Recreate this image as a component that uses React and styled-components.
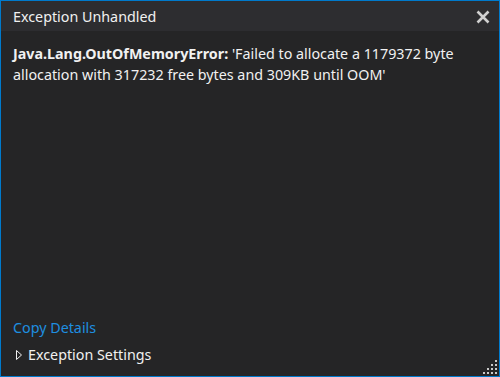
import React from "react";
import styled, { createGlobalStyle } from "styled-components";

const GlobalStyle = createGlobalStyle`
  html, body {
    margin: 0;
    padding: 0;
    background: #252526;
  }
  body {
    font-family: "Segoe UI", "Noto Sans", "Open Sans", sans-serif;
  }
`;

const Window = styled.div`
  box-sizing: border-box;
  width: 500px;
  height: 377px;
  border: 1px solid #007acc;
  background: #252526;
  display: flex;
  flex-direction: column;
  color: #f1f1f1;
`;

const TitleBar = styled.div`
  height: 29px;
  background: #2d2d30;
  display: flex;
  align-items: center;
  justify-content: space-between;
  padding: 1px 8px 0 12px;
`;

const Title = styled.span`
  font-size: 14.3px;
  color: #f1f1f1;
`;

const CloseButton = styled.button`
  border: none;
  background: none;
  padding: 0;
  width: 16px;
  height: 16px;
  display: flex;
  align-items: center;
  justify-content: center;
  cursor: pointer;
`;

const Body = styled.div`
  flex: 1;
  display: flex;
  flex-direction: column;
  padding: 12px 12px 12px 12px;
`;

const Message = styled.div`
  font-size: 14.3px;
  line-height: 21px;
  color: #f1f1f1;
`;

const ErrorName = styled.span`
  font-weight: 700;
`;

const Footer = styled.div`
  margin-top: auto;
  display: flex;
  flex-direction: column;
  gap: 8px;
`;

const Link = styled.a`
  font-size: 14.3px;
  color: #1e8fe0;
  text-decoration: none;
  cursor: pointer;
`;

const Expander = styled.div`
  display: flex;
  align-items: center;
  gap: 6px;
  font-size: 14.3px;
  color: #f1f1f1;
  padding-left: 3px;
`;

const Grip = styled.svg`
  position: absolute;
  right: 3px;
  bottom: 3px;
`;

const Frame = styled.div`
  position: relative;
`;

function App() {
  const dots = [];
  for (let r = 0; r < 4; r++) {
    for (let c = 3 - r; c < 4; c++) {
      dots.push(<rect key={`${r}-${c}`} x={c * 4} y={r * 4} width="2" height="2" fill="#c8c8c8" />);
    }
  }

  return (
    <>
      <GlobalStyle />
      <Frame>
        <Window>
          <TitleBar>
            <Title>Exception Unhandled</Title>
            <CloseButton aria-label="Close">
              <svg width="14" height="14" viewBox="0 0 14 14">
                <path d="M1.5 1.5 L12.5 12.5 M12.5 1.5 L1.5 12.5" stroke="#d0d0d0" strokeWidth="2.6" />
              </svg>
            </CloseButton>
          </TitleBar>
          <Body>
            <Message>
              <ErrorName>Java.Lang.OutOfMemoryError:</ErrorName>{" "}
              'Failed to allocate a 1179372 byte allocation with 317232 free bytes and 309KB until OOM'
            </Message>
            <Footer>
              <Link>Copy Details</Link>
              <Expander>
                <svg width="6" height="10" viewBox="0 0 6 10">
                  <path d="M0.5 0.5 L5.5 5 L0.5 9.5 Z" fill="none" stroke="#f1f1f1" strokeWidth="1" />
                </svg>
                Exception Settings
              </Expander>
            </Footer>
          </Body>
        </Window>
        <Grip width="14" height="14" viewBox="0 0 14 14">
          {dots}
        </Grip>
      </Frame>
    </>
  );
}

export default App;
